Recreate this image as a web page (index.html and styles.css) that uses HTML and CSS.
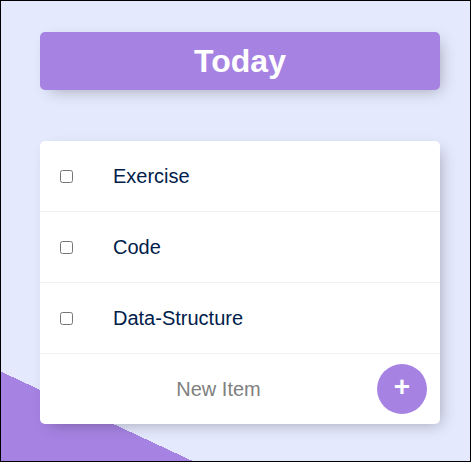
FILE: index.html
```html
<!DOCTYPE html>
<html>
<head>
<meta charset="utf-8">
<link rel="stylesheet" href="styles.css">
</head>
<body>
<div class="frame">
  <div class="box heading"><h1>Today</h1></div>
  <div class="box list">
    <div class="item"><input type="checkbox"><p>Exercise</p></div>
    <div class="item"><input type="checkbox"><p>Code</p></div>
    <div class="item"><input type="checkbox"><p>Data-Structure</p></div>
    <div class="item">
      <form class="add-form">
        <input class="new-item" type="text" placeholder="New Item">
        <button type="button" class="add-btn">+</button>
      </form>
    </div>
  </div>
</div>
</body>
</html>
```

FILE: styles.css
```css
html, body {
  margin: 0;
  padding: 0;
}
body {
  font-family: "Liberation Sans", Arial, sans-serif;
}
.frame {
  width: 471px;
  height: 462px;
  box-sizing: border-box;
  border: 1px solid #000;
  overflow: hidden;
  background-color: #e4e9fd;
  background-image: linear-gradient(25deg, #a683e3 81px, #e4e9fd 81px);
  padding-top: 31px;
}
.box {
  width: 400px;
  margin-left: 39px;
  background: #fff;
  border-radius: 5px;
  box-shadow: 5px 5px 15px -5px rgba(0, 0, 0, 0.3);
}
.heading {
  background-color: #a683e3;
  text-align: center;
  height: 58px;
  display: flex;
  align-items: center;
  justify-content: center;
}
.heading h1 {
  margin: 0;
  color: #fff;
  font-size: 32px;
  font-weight: bold;
  line-height: 37px;
}
.list {
  margin-top: 51px;
}
.item {
  min-height: 70px;
  display: flex;
  align-items: center;
  border-bottom: 1px solid #f1f1f1;
}
.item:last-child {
  border-bottom: 0;
}
.item input[type="checkbox"] {
  margin: 0 20px;
  width: 13px;
  height: 13px;
}
.item p {
  margin: 0;
  padding: 20px;
  font-size: 20px;
  font-weight: 200;
  color: #00204a;
}
.add-form {
  display: flex;
  align-items: center;
  margin: 0 0 0 20px;
}
.new-item {
  width: 317px;
  height: 60px;
  box-sizing: border-box;
  border: none;
  text-align: center;
  font-family: "Liberation Sans", Arial, sans-serif;
  font-size: 20px;
  padding: 0;
  outline: none;
}
.new-item::placeholder {
  color: grey;
  opacity: 1;
}
.add-btn {
  width: 50px;
  height: 50px;
  border-radius: 50%;
  border: 0;
  background-color: #a683e3;
  color: #fff;
  font-family: "Liberation Sans", Arial, sans-serif;
  font-size: 28px;
  font-weight: bold;
  line-height: 1;
  padding: 0 0 5px 0;
}
```
